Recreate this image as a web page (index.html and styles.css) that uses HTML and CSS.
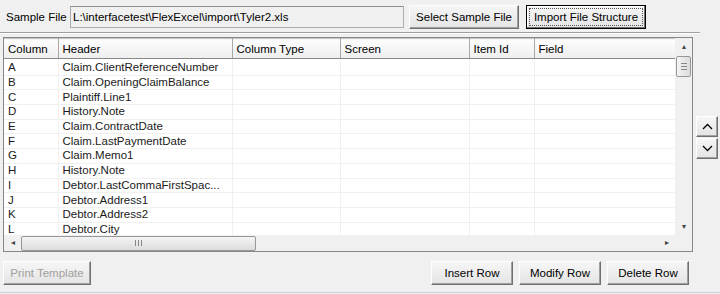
FILE: index.html
```html
<!DOCTYPE html>
<html lang="en">
<head>
    <meta charset="UTF-8">
    <title>Import File Structure</title>
    <link rel="stylesheet" href="styles.css">
</head>
<body>
    <div class="top">
        <span class="lbl">Sample File</span>
        <div class="path">L:\interfacetest\FlexExcel\import\Tyler2.xls</div>
        <button class="btn btn-select">Select Sample File</button>
        <button class="btn btn-import"><span class="focus">Import File Structure</span></button>
    </div>
    <div class="sep"></div>

    <div class="middle">
        <div class="grid">
            <div class="cells">
                <table>
                    <colgroup>
                        <col class="c1"><col class="c2"><col class="c3"><col class="c4"><col class="c5"><col class="c6">
                    </colgroup>
                    <thead>
                        <tr>
                            <th>Column</th>
                            <th>Header</th>
                            <th>Column Type</th>
                            <th>Screen</th>
                            <th>Item Id</th>
                            <th>Field</th>
                        </tr>
                    </thead>
                    <tbody id="rows"></tbody>
                </table>
            </div>
            <div class="vscroll">
                <div class="arr up">&#9652;</div>
                <div class="thumb-v"><span></span><span></span><span></span></div>
                <div class="fill"></div>
                <div class="arr dn">&#9662;</div>
            </div>
            <div class="hscroll">
                <div class="arr lf">&#9666;</div>
                <div class="thumb-h"><span></span><span></span><span></span></div>
                <div class="fill"></div>
                <div class="arr rt">&#9656;</div>
            </div>
            <div class="corner"></div>
        </div>
        <div class="moves">
            <button class="mv">
                <svg width="11" height="7" viewBox="0 0 11 7"><path d="M1 6 L5.5 1.5 L10 6" fill="none" stroke="#000" stroke-width="1.3"/></svg>
            </button>
            <button class="mv">
                <svg width="11" height="7" viewBox="0 0 11 7"><path d="M1 1 L5.5 5.5 L10 1" fill="none" stroke="#000" stroke-width="1.3"/></svg>
            </button>
        </div>
    </div>

    <div class="bottom">
        <button class="btn btn-print" disabled>Print Template</button>
        <div class="spacer"></div>
        <button class="btn btn-row">Insert Row</button>
        <button class="btn btn-row">Modify Row</button>
        <button class="btn btn-row">Delete Row</button>
    </div>
    <div class="foot"></div>

    <script>
        const filas = [
            ['A', 'Claim.ClientReferenceNumber'],
            ['B', 'Claim.OpeningClaimBalance'],
            ['C', 'Plaintiff.Line1'],
            ['D', 'History.Note'],
            ['E', 'Claim.ContractDate'],
            ['F', 'Claim.LastPaymentDate'],
            ['G', 'Claim.Memo1'],
            ['H', 'History.Note'],
            ['I', 'Debtor.LastCommaFirstSpac...'],
            ['J', 'Debtor.Address1'],
            ['K', 'Debtor.Address2'],
            ['L', 'Debtor.City']
        ];
        const cuerpo = document.getElementById('rows');
        filas.forEach(f => {
            const tr = cuerpo.insertRow();
            tr.innerHTML = `<td>${f[0]}</td><td>${f[1]}</td><td></td><td></td><td></td><td></td>`;
        });
    </script>
</body>
</html>
```

FILE: styles.css
```css
body {
    margin: 0;
    background: #f0f0f0;
    font-family: 'Liberation Sans', Arial, sans-serif;
    font-size: 11.5px;
    color: #000;
    width: 720px;
    height: 294px;
    overflow: hidden;
}
.top {
    display: flex;
    align-items: center;
    height: 24px;
    padding: 5px 0 0 6px;
}
.lbl {
    width: 64px;
}
.path {
    width: 330px;
    height: 20px;
    line-height: 20px;
    border: 1px solid #abadb3;
    border-top-color: #8e8f8f;
    background: #f0f0f0;
    padding-left: 2px;
}
.btn {
    font-family: inherit;
    font-size: 11.5px;
    color: #000;
    height: 24px;
    background: linear-gradient(#f6f6f6, #e4e4e4);
    border: 1px solid #fff;
    border-right-color: #707070;
    border-bottom-color: #707070;
    box-shadow: inset -1px -1px 0 #a0a0a0;
    padding: 0;
    margin: 0;
}
.btn-select {
    width: 110px;
    margin-left: 5px;
}
.btn-import {
    width: 120px;
    margin-left: 7px;
    border: 1px solid #000;
    box-shadow: inset -1px -1px 0 #707070, inset 1px 1px 0 #fff;
}
.focus {
    display: inline-block;
    border: 1px dotted #555;
    padding: 2px 4px;
}
.sep {
    margin-top: 3px;
    width: 700px;
    border-top: 1px solid #a0a0a0;
    border-bottom: 1px solid #fff;
}
.middle {
    display: flex;
    margin-top: 3px;
    margin-left: 3px;
}
.grid {
    display: grid;
    grid-template-columns: 671px 17px;
    grid-template-rows: 197px 16px;
    border: 1px solid #828790;
    background: #fff;
}
.cells {
    overflow: hidden;
}
table {
    border-collapse: collapse;
    table-layout: fixed;
    width: 671px;
}
.c1 { width: 54px; }
.c2 { width: 174px; }
.c3 { width: 108px; }
.c4 { width: 129px; }
.c5 { width: 65px; }
.c6 { width: 141px; }
th {
    height: 18px;
    padding: 1px 0 0 4px;
    font-weight: normal;
    text-align: left;
    background: linear-gradient(#fdfdfd, #eeeeee);
    border-right: 1px solid #a9a9a9;
    border-bottom: 1px solid #888;
    border-top: 1px solid #c8c8c8;
    white-space: nowrap;
    overflow: hidden;
}
th:last-child {
    border-right: none;
}
td {
    height: 13.7px;
    line-height: 13px;
    padding: 0 0 0 4px;
    border-right: 1px solid #f0f0f0;
    border-bottom: 1px solid #f0f0f0;
    white-space: nowrap;
    overflow: hidden;
    color: #1a1a1a;
}
td:last-child {
    border-right: none;
}
tbody tr:first-child td {
    padding-top: 2px;
}
.vscroll {
    display: flex;
    flex-direction: column;
    background: #f0f0f0;
}
.arr {
    font-size: 8px;
    color: #444;
    text-align: center;
    height: 17px;
    line-height: 17px;
}
.thumb-v {
    margin: 1px 1px 0 1px;
    height: 19px;
    border: 1px solid #979797;
    border-radius: 2px;
    background: linear-gradient(90deg, #f4f4f4, #dcdcdc);
    display: flex;
    flex-direction: column;
    align-items: center;
    justify-content: center;
    gap: 2px;
}
.thumb-v span {
    width: 6px;
    height: 1px;
    background: #888;
}
.fill {
    flex: 1;
}
.hscroll {
    display: flex;
    align-items: center;
    background: #f0f0f0;
}
.hscroll .arr {
    width: 17px;
    height: 16px;
    line-height: 16px;
}
.thumb-h {
    width: 233px;
    height: 13px;
    border: 1px solid #979797;
    border-radius: 2px;
    background: linear-gradient(#f4f4f4, #dcdcdc);
    display: flex;
    align-items: center;
    justify-content: center;
    gap: 2px;
}
.thumb-h span {
    width: 1px;
    height: 6px;
    background: #888;
}
.corner {
    background: #f0f0f0;
}
.moves {
    display: flex;
    flex-direction: column;
    margin-top: 79px;
    margin-left: 3px;
}
.mv {
    width: 22px;
    height: 21px;
    padding: 0;
    margin-bottom: 1px;
    background: linear-gradient(#f6f6f6, #e4e4e4);
    border: 1px solid #fff;
    border-right-color: #707070;
    border-bottom-color: #707070;
    box-shadow: inset -1px -1px 0 #a0a0a0;
    display: flex;
    align-items: center;
    justify-content: center;
}
.bottom {
    display: flex;
    margin-top: 9px;
    margin-left: 3px;
    width: 686px;
}
.spacer {
    flex: 1;
}
.btn-print {
    width: 88px;
    color: #a0a0a0;
}
.btn-row {
    width: 82px;
    margin-left: 6px;
}
.foot {
    margin-top: 7px;
    border-top: 1px solid #c9d3e0;
}
```
